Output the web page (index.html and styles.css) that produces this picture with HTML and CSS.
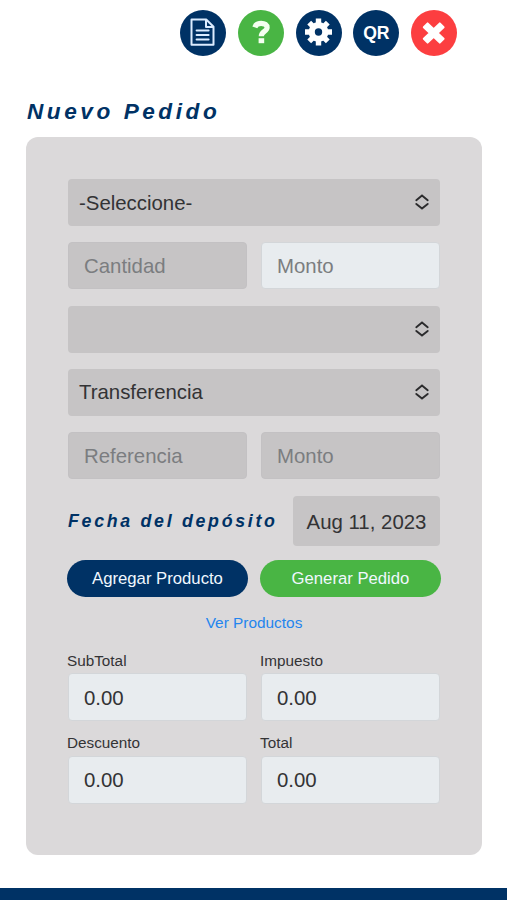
FILE: index.html
```html
<!DOCTYPE html>
<html lang="es">
<head>
<meta charset="utf-8">
<meta name="viewport" content="width=device-width, initial-scale=1">
<title>Nuevo Pedido</title>
<link rel="stylesheet" href="styles.css">
</head>
<body>
<nav class="toolbar">
  <button class="tool navy" aria-label="Documento">
    <svg viewBox="0 0 46 46" fill="none" stroke="#dcecff" stroke-width="2" stroke-linejoin="round">
      <path d="M11.500 9.500h14.700l7.300 7.300V34.700h-22z"/>
      <path d="M26 9.800v7.200h7.200"/>
      <path d="M16.600 20.600h12M16.600 25h12M16.600 29.400h12" stroke-linecap="round"/>
    </svg>
  </button>
  <button class="tool green" aria-label="Ayuda">
    <svg viewBox="0 0 46 46" fill="none" stroke="#f4fff0">
      <path d="M16.800 17.300c1-2.800 3.200-4 6.300-4 3.800 0 6 1.500 6 4.300 0 4-5.800 3.800-5.800 8.700" stroke-width="5.200"/>
      <path d="M20.600 28.200h5.600v5h-5.600z" fill="#f4fff0" stroke="none"/>
    </svg>
  </button>
  <button class="tool navy" aria-label="Ajustes">
    <svg viewBox="0 0 46 46" fill="none" stroke="#fff">
      <circle cx="22.500" cy="22" r="6.800" stroke-width="6.200"/>
      <g stroke-width="5.400" stroke-linecap="butt">
        <path d="M22.500 8.500v5M22.500 30.500v5M9 22h5M31 22h5"/>
        <path d="M13.200 12.700l3.500 3.500M28.300 27.800l3.500 3.500M31.800 12.700l-3.500 3.500M16.700 27.800l-3.500 3.500"/>
      </g>
    </svg>
  </button>
  <button class="tool navy qr">QR</button>
  <button class="tool red" aria-label="Cerrar">
    <svg viewBox="0 0 46 46" fill="#fff" stroke="#fff" stroke-width="2" stroke-linejoin="round">
      <path d="M16.600 13.400l6.100 5.800 6.100-5.800 3.800 3.800-6.100 5.800 6.100 5.800-3.800 3.800-6.100-5.800-6.100 5.800-3.800-3.800 6.100-5.800-6.100-5.800z"/>
    </svg>
  </button>
</nav>

<main class="page">
  <h1 class="title">Nuevo Pedido</h1>
  <form class="card">
    <div class="select">
      <span>-Seleccione-</span>
      <svg class="chevrons" viewBox="0 0 16 16"><path d="M2.300 6.200L8 1.500l5.700 4.700M2.300 9.900L8 14.600l5.700-4.700"/></svg>
    </div>
    <div class="pair">
      <input class="field" placeholder="Cantidad">
      <input class="field light" placeholder="Monto">
    </div>
    <div class="select">
      <span></span>
      <svg class="chevrons" viewBox="0 0 16 16"><path d="M2.300 6.200L8 1.500l5.700 4.700M2.300 9.900L8 14.600l5.700-4.700"/></svg>
    </div>
    <div class="select">
      <span>Transferencia</span>
      <svg class="chevrons" viewBox="0 0 16 16"><path d="M2.300 6.200L8 1.500l5.700 4.700M2.300 9.900L8 14.600l5.700-4.700"/></svg>
    </div>
    <div class="pair">
      <input class="field" placeholder="Referencia">
      <input class="field" placeholder="Monto">
    </div>
    <div class="deposit">
      <span class="deposit-label">Fecha del depósito</span>
      <span class="date">Aug 11, 2023</span>
    </div>
    <div class="actions">
      <button type="button" class="pill navy">Agregar Producto</button>
      <button type="button" class="pill green">Generar Pedido</button>
    </div>
    <a class="link">Ver Productos</a>
    <div class="totals">
      <label class="total">SubTotal<input class="field light" value="0.00"></label>
      <label class="total">Impuesto<input class="field light" value="0.00"></label>
      <label class="total">Descuento<input class="field light" value="0.00"></label>
      <label class="total">Total<input class="field light" value="0.00"></label>
    </div>
  </form>
</main>
<footer class="footer"></footer>
</body>
</html>
```
FILE: styles.css
```css
* { box-sizing: border-box; }

body {
  margin: 0;
  height: 900px;
  overflow: hidden;
  display: flex;
  flex-direction: column;
  background: #fff;
  color: #333335;
  font-family: "Liberation Sans", Arial, sans-serif;
  font-size: 20.4px;
}

button, input { font: inherit; border: 0; padding: 0; margin: 0; }

.navy { background: #003265; }
.green { background: #49b544; }
.red { background: #fc3e40; }

.toolbar {
  display: flex;
  gap: 11.8px;
  padding: 10px 0 0 180px;
}
.tool {
  flex: none;
  width: 46px;
  height: 46px;
  border-radius: 50%;
  color: #fff;
}
.tool svg { display: block; width: 46px; height: 46px; }
.tool.qr { font-size: 17.6px; font-weight: bold; }

.page { padding: 42px 25px 0 26px; }
.title {
  margin: 0;
  height: 39px;
  padding-left: 1px;
  line-height: 28px;
  font-size: 22.6px;
  font-style: italic;
  font-weight: bold;
  letter-spacing: 3.55px;
  color: #003265;
}

.card {
  height: 718px;
  padding: 42px 41px 0;
  border-radius: 12px;
  background: #dbd9da;
}

.select {
  display: flex;
  align-items: center;
  justify-content: space-between;
  height: 47px;
  margin: 0 1px 16.4px;
  padding: 1px 10px 0 11px;
  border-radius: 4px;
  background: #c6c4c5;
}
.chevrons {
  width: 16px;
  height: 16px;
  margin-top: -2px;
  fill: none;
  stroke: #2b2b2d;
  stroke-width: 1.9;
  stroke-linecap: round;
}

.pair {
  display: grid;
  grid-template-columns: 179px 179px;
  justify-content: space-between;
  margin: 0 1px 16.2px;
}
.field {
  display: block;
  width: 100%;
  min-width: 0;
  height: 47px;
  padding: 2px 15px 0;
  border: 1px solid #c3c1c3;
  border-radius: 4px;
  background: #c6c4c5;
  color: #333335;
}
.field::placeholder { color: #7b7d80; opacity: 1; }
.light { background: #e8ecef; border-color: #d3d6d9; }

.deposit {
  display: flex;
  align-items: center;
  justify-content: space-between;
  height: 50px;
  margin: 0 1px 14.6px;
}
.deposit-label {
  padding-top: 1px;
  font-size: 17.8px;
  font-style: italic;
  font-weight: bold;
  letter-spacing: 2.7px;
  white-space: nowrap;
  color: #003265;
}
.date {
  width: 147px;
  height: 50px;
  line-height: 52px;
  text-align: center;
  white-space: nowrap;
  border-radius: 4px;
  background: #c6c4c5;
}

.actions {
  display: grid;
  grid-template-columns: 181px 181px;
  justify-content: space-between;
}
.pill {
  height: 37px;
  padding-top: 1px;
  border-radius: 19px;
  color: #f0f8ff;
  font-size: 16.7px;
}

.link {
  display: block;
  height: 26px;
  margin-top: 13px;
  line-height: 26px;
  text-align: center;
  font-size: 15.4px;
  color: #2485ee;
}

.totals {
  display: grid;
  grid-template-columns: 180px 180px;
  gap: 11px 13px;
  margin-top: 13.6px;
}
.total { display: block; font-size: 15.3px; line-height: 22px; }
.total .field {
  width: 179px;
  height: 48px;
  margin: 1.4px 0 0 1px;
  font-size: 20.4px;
}

.footer {
  margin-top: 33px;
  height: 12px;
  background: #003265;
}
```
